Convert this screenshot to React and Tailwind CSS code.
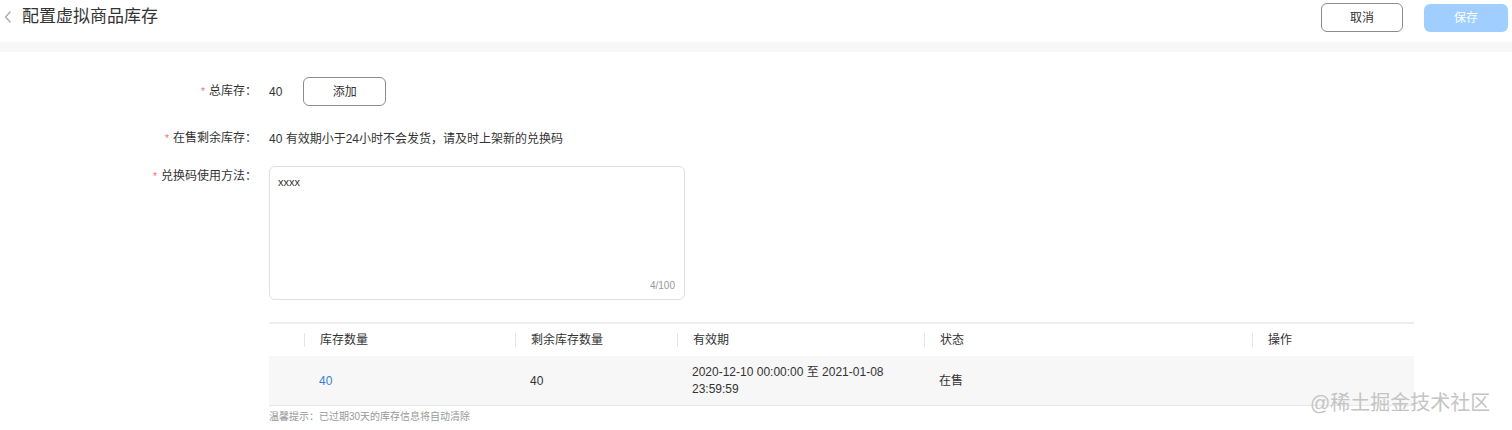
import React from "react";

const font = { fontFamily: '"Liberation Sans", "Noto Sans CJK SC", sans-serif' };

const columns = [
  { key: "sel", label: "", width: "w-[35px]" },
  { key: "total", label: "库存数量", width: "w-[211px]" },
  { key: "left", label: "剩余库存数量", width: "w-[162px]" },
  { key: "date", label: "有效期", width: "w-[247px]" },
  { key: "status", label: "状态", width: "w-[328px]" },
  { key: "op", label: "操作", width: "flex-1" },
];

function Label({ children }) {
  return (
    <div className="w-[269px] shrink-0 pr-3 text-right text-[12px] leading-5 text-[#333]">
      <span className="mr-1 text-[10px] text-[#f56c6c]">*</span>
      {children}
    </div>
  );
}

export default function App() {
  return (
    <div className="relative min-h-[430px] w-full bg-white" style={font}>
      {/* top bar */}
      <div className="flex h-[42px] items-start justify-between">
        <div className="flex items-center pt-[7px]">
          <svg className="ml-[3px] h-[14px] w-[10px]" viewBox="0 0 10 14" fill="none">
            <path d="M7.5 1.5 L2.5 7 L7.5 12.5" stroke="#a8a8a8" strokeWidth="1.3" />
          </svg>
          <span className="ml-[9px] text-[17px] leading-5 text-[#333]">配置虚拟商品库存</span>
        </div>
        <div className="flex items-center gap-[21px] pr-[4px] pt-[3px]">
          <button className="h-[29px] w-[82px] rounded-[6px] border border-[#8c8c8c] bg-white text-[12px] text-[#333]">
            取消
          </button>
          <button className="h-[28px] w-[84px] rounded-[6px] bg-[#a0cfff] text-[12px] text-white">
            保存
          </button>
        </div>
      </div>
      <div className="h-[10px] bg-[#f7f7f7]" />

      {/* form */}
      <div className="pt-[25px]">
        <div className="flex h-[29px] items-center">
          <Label>总库存：</Label>
          <span className="text-[12px] text-[#333]">40</span>
          <button className="ml-[21px] h-[29px] w-[83px] rounded-[6px] border border-[#8c8c8c] bg-white text-[12px] text-[#333]">
            添加
          </button>
        </div>

        <div className="mt-[18px] flex h-[29px] items-center">
          <Label>在售剩余库存：</Label>
          <span className="text-[12px] text-[#333]">40 有效期小于24小时不会发货，请及时上架新的兑换码</span>
        </div>

        <div className="mt-[13px] flex items-start">
          <Label>兑换码使用方法：</Label>
          <div className="relative h-[134px] w-[416px] rounded-[6px] border border-[#dcdfe6] px-2 pt-[7px]">
            <div className="text-[11px] leading-4 text-[#333]">xxxx</div>
            <span className="absolute bottom-[5px] right-[9px] text-[10px] leading-4 text-[#999]">4/100</span>
          </div>
        </div>

        {/* table */}
        <div className="ml-[269px] mt-[22px] w-[1145px]">
          <div className="flex h-[34px] items-center border-t-2 border-[#eeeeee]">
            {columns.map((c, i) => (
              <div key={c.key} className={`${c.width} flex h-full items-center`}>
                {i > 0 && <span className="h-[14px] w-px bg-[#e5e5e5]" />}
                <span className="pl-[15px] text-[12px] text-[#333]">{c.label}</span>
              </div>
            ))}
          </div>
          <div className="flex h-[50px] items-center border-b border-[#e8e8e8] bg-[#f7f7f7] text-[12px] text-[#333]">
            <div className="w-[35px]" />
            <div className="w-[211px] pl-[15px] text-[#3a7fd5]">40</div>
            <div className="w-[162px] pl-[15px]">40</div>
            <div className="w-[247px] pl-[15px]">
              <div className="w-[200px] leading-[17px]">2020-12-10 00:00:00 至 2021-01-08 23:59:59</div>
            </div>
            <div className="w-[328px] pl-[15px]">在售</div>
            <div className="flex-1" />
          </div>
          <div className="pt-[3px] text-[10px] leading-4 text-[#999]">温馨提示：已过期30天的库存信息将自动清除</div>
        </div>
      </div>

      <div className="absolute left-[1310px] top-[391px] text-[20px] leading-6 text-[#c4c4c4]">@稀土掘金技术社区</div>
    </div>
  );
}
